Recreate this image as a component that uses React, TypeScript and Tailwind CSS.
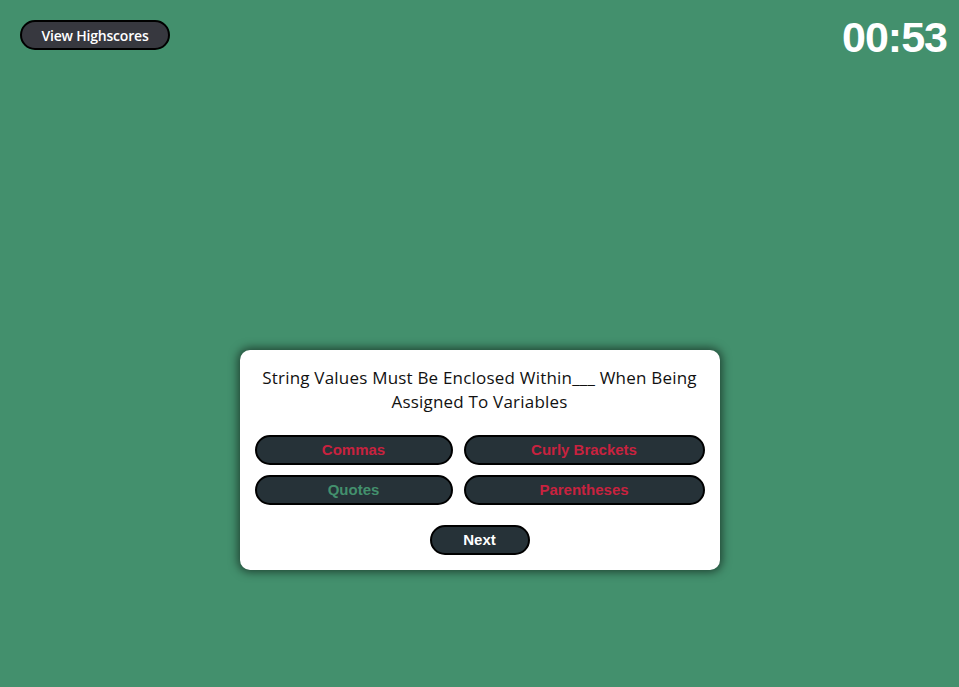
const answers = [
  { label: "Commas", correct: false },
  { label: "Curly Brackets", correct: false },
  { label: "Quotes", correct: true },
  { label: "Parentheses", correct: false },
];

export default function App() {
  return (
    <div className="min-h-[687px] w-full bg-[#43906d] font-['Open_Sans',sans-serif]">
      <header className="flex items-start justify-between pl-5 pr-3 pt-5">
        <button className="h-[30px] w-[150px] rounded-full border-2 border-black bg-[#37383f] text-[14px] font-semibold tracking-[-0.2px] text-white">
          View Highscores
        </button>
        <div className="-mt-[4px] font-['Liberation_Sans',Arial,sans-serif] text-[43px] font-bold leading-none tracking-[-1px] text-white">
          00:53
        </div>
      </header>

      <main className="flex justify-center pt-[291px]">
        <div className="w-[480px] rounded-[10px] bg-white px-[15px] pb-[15px] pt-[16px] shadow-[0_0_10px_2px_rgba(0,0,0,0.55)]">
          <p className="text-center text-[17px] leading-[24px] tracking-[0.2px] text-[#111]">
            String Values Must Be Enclosed Within___ When Being Assigned To Variables
          </p>
          <div className="mt-[21px] grid grid-cols-[198px_241px] gap-x-[11px] gap-y-[10px]">
            {answers.map((a) => (
              <button
                key={a.label}
                className={
                  "h-[30px] rounded-full border-2 border-black bg-[#263238] font-['Liberation_Sans',Arial,sans-serif] text-[15px] font-bold " +
                  (a.correct ? "text-[#43906d]" : "text-[#c8223f]")
                }
              >
                {a.label}
              </button>
            ))}
          </div>
          <div className="mt-[20px] flex justify-center">
            <button className="h-[30px] w-[100px] rounded-full border-2 border-black bg-[#263238] font-['Liberation_Sans',Arial,sans-serif] text-[15px] font-bold text-white">
              Next
            </button>
          </div>
        </div>
      </main>
    </div>
  );
}
